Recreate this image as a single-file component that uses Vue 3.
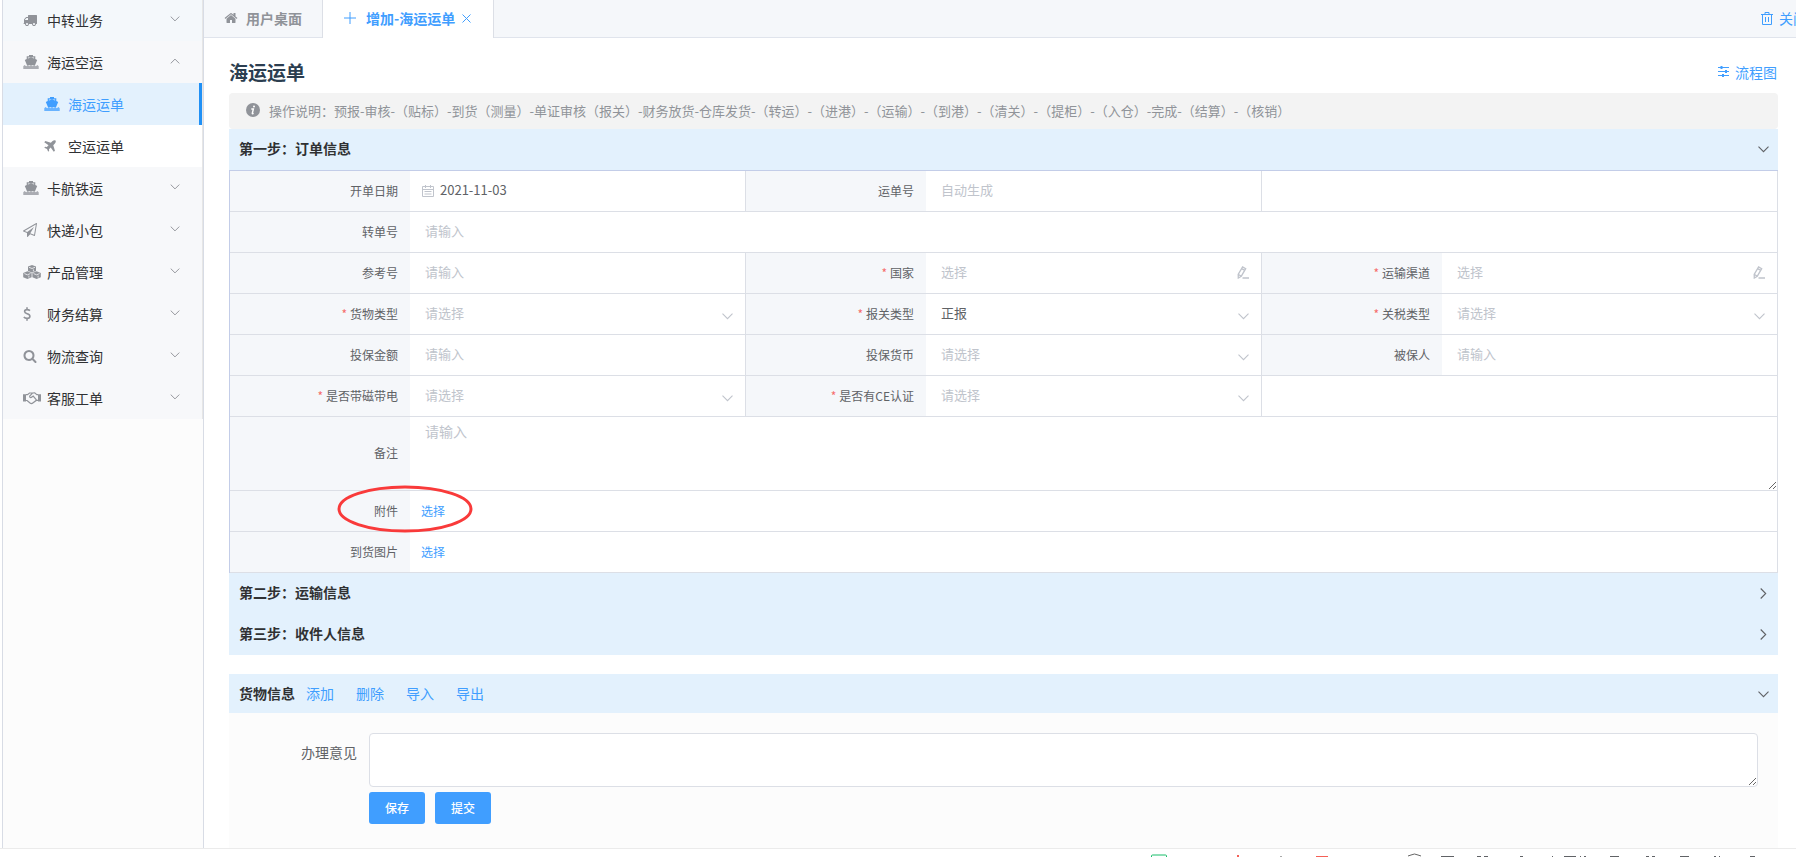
<script setup>
import { ref } from 'vue'

const menu = [
  { text: '中转业务', icon: 'truck', tint: true },
  { text: '海运空运', icon: 'ship', open: true, children: [
    { text: '海运运单', icon: 'ship', active: true },
    { text: '空运运单', icon: 'plane' }
  ] },
  { text: '卡航铁运', icon: 'ship' },
  { text: '快递小包', icon: 'send' },
  { text: '产品管理', icon: 'cubes' },
  { text: '财务结算', icon: 'dollar' },
  { text: '物流查询', icon: 'search' },
  { text: '客服工单', icon: 'handshake' }
]

const fields = [
  { id: 'date', label: '开单日期', type: 'date', value: '2021-11-03' },
  { id: 'waybill', label: '运单号', type: 'text', hint: '自动生成' },
  { id: 'blank1', type: 'blank' },
  { id: 'transfer', label: '转单号', type: 'text', hint: '请输入', wide: true },
  { id: 'reference', label: '参考号', type: 'text', hint: '请输入' },
  { id: 'country', label: '国家', type: 'pick', hint: '选择', required: true },
  { id: 'channel', label: '运输渠道', type: 'pick', hint: '选择', required: true },
  { id: 'cargo', label: '货物类型', type: 'select', hint: '请选择', required: true },
  { id: 'customs', label: '报关类型', type: 'select', value: '正报', required: true },
  { id: 'tariff', label: '关税类型', type: 'select', hint: '请选择', required: true },
  { id: 'amount', label: '投保金额', type: 'text', hint: '请输入' },
  { id: 'currency', label: '投保货币', type: 'select', hint: '请选择' },
  { id: 'insured', label: '被保人', type: 'text', hint: '请输入' },
  { id: 'magnetic', label: '是否带磁带电', type: 'select', hint: '请选择', required: true },
  { id: 'ce', label: '是否有CE认证', type: 'select', hint: '请选择', required: true },
  { id: 'blank2', type: 'blank' },
  { id: 'remark', label: '备注', type: 'area', hint: '请输入', wide: true },
  { id: 'attachment', label: '附件', type: 'file', wide: true, marked: true },
  { id: 'photos', label: '到货图片', type: 'file', wide: true }
]

const actions = ['添加', '删除', '导入', '导出']
const opinion = ref('')
</script>

<template>
  <div class="app" lang="zh-CN">
    <svg class="defs" aria-hidden="true">
      <symbol id="truck" viewBox="0 0 1792 1792"><path d="M640 1408q0-52-38-90t-90-38-90 38-38 90 38 90 90 38 90-38 38-90zm-384-512h384v-256h-158q-13 0-22 9l-195 195q-9 9-9 22v30zm1280 512q0-52-38-90t-90-38-90 38-38 90 38 90 90 38 90-38 38-90zm256-1088v1024q0 15-4 26.5t-13.5 18.5-16.5 11.5-23.5 6-22.5 2-25.5 0-22.5-.5q0 106-75 181t-181 75-181-75-75-181h-384q0 106-75 181t-181 75-181-75-75-181h-64q-3 0-22.5.5t-25.5 0-22.5-2-23.5-6-16.5-11.5-13.5-18.5-4-26.5q0-26 19-45t45-19v-320q0-8-.5-35t0-38 2.5-34.5 6.5-37 14-30.5 22.5-30l198-198q19-19 50.5-32t58.5-13h160v-192q0-26 19-45t45-19h1024q26 0 45 19t19 45z" /></symbol>
      <symbol id="ship" viewBox="0 0 16 14">
        <path d="M6 0h4v1.2h2.3v2.9L14.2 5 12 10.2H4L1.8 5l1.9-.9V1.2H6zM4.9 2.4v1.2L8 2.4l3.1 1.2V2.4z" fill-rule="evenodd" />
        <path d="M.3 11.2 1.6 10l1.6 1.2L4.8 10l1.6 1.2L8 10l1.6 1.2 1.6-1.2 1.6 1.2 1.6-1.2 1.3 1.2V14H.3z" opacity=".75" />
      </symbol>
      <symbol id="plane" viewBox="0 0 14 14"><path d="M13.400.6c.8.8.2 2.500-.7 3.400L10.800 6l2 6.400-1.400 1.300-3.600-5-2 2 .2 1.900-1.100 1.100-1.400-3.200L.3 9.100l1.100-1.100 1.900.2 2-2L.3 2.600l1.300-1.400L8 3.200l2-1.900c.9-.9 2.600-1.500 3.400-.7z" /></symbol>
      <symbol id="send" viewBox="0 0 1792 1792"><path d="M1764 11q33 24 27 64l-256 1536q-5 29-32 45-14 8-31 8-11 0-24-5l-527-215-298 327q-18 21-47 21-14 0-23-4-19-7-30-23.5t-11-36.5v-452l-472-193q-37-14-40-55-3-39 32-59l1664-960q35-21 68 2zm-342 1499l221-1323-1434 827 336 137 863-639-478 797z" /></symbol>
      <symbol id="cubes" viewBox="0 0 18 14">
        <path d="m9 0 4 1.600v4.300L9 7.600 5 5.900V1.600zM4.400 6.200l4.200 1.700v4.400L4.400 14 .2 12.300V7.900zM13.600 6.200l4.200 1.700v4.400L13.600 14l-4.200-1.700V7.900z" />
        <path d="M6 2.300 9 3.500l3-1.200M1.400 8.600l3 1.200 3-1.200M10.600 8.600l3 1.200 3-1.200M10.400 4.400v2M5.900 10.600v2M15.100 10.600v2" fill="none" stroke="#f7f8fa" stroke-width=".8" />
      </symbol>
      <symbol id="dollar" viewBox="0 0 8 14"><path d="M7 3.700C6.200 3 5.300 2.600 4.100 2.600 2.700 2.600 1.600 3.300 1.600 4.500c0 2.900 5.300 1.600 5.300 4.700 0 1.400-1.200 2.200-2.800 2.200-1.300 0-2.500-.5-3.300-1.400M4 .2v2.200M4 11.500v2.300" fill="none" stroke="currentColor" stroke-width="1.600" /></symbol>
      <symbol id="search" viewBox="0 0 1792 1792"><path d="M1216 832q0-185-131.500-316.500t-316.500-131.500-316.500 131.500-131.500 316.500 131.500 316.500 316.500 131.500 316.500-131.500 131.500-316.500zm512 832q0 52-38 90t-90 38q-54 0-90-38l-343-342q-179 124-399 124-143 0-273.500-55.500t-225-150-150-225-55.500-273.500 55.500-273.500 150-225 225-150 273.500-55.500 273.500 55.500 225 150 150 225 55.500 273.500q0 220-124 399l343 343q37 37 37 90z" /></symbol>
      <symbol id="handshake" viewBox="0 0 18 14">
        <path d="M0 3.200h3v7.200H0zM15 3.200h3v7.200h-3z" />
        <path d="M3 3.700h1.500L6.500 2h3l2.200-.1 2.100 1.700H15M3 9.500h1.100L7 12c1 .7 2 .7 2.800 0l3.400-2.600H15M9.500 2.200 6.700 5c-.4 1.600 1.100 2.100 2.200 1L10.200 5l3.200 3.800" fill="none" stroke="currentColor" stroke-width="1.200" />
      </symbol>
      <symbol id="home" viewBox="0 0 1792 1792"><path d="M1472 992v480q0 26-19 45t-45 19h-384v-384h-256v384h-384q-26 0-45-19t-19-45v-480q0-1 .5-3t.5-3l575-474 575 474q1 2 1 6zm223-69l-62 74q-8 9-21 11h-3q-13 0-21-7l-692-577-692 577q-12 8-24 7-13-2-21-11l-62-74q-8-10-7-23.500t11-21.500l719-599q32-26 76-26t76 26l244 204v-195q0-14 9-23t23-9h192q14 0 23 9t9 23v408l219 182q10 8 11 21.500t-7 23.500z" /></symbol>
      <symbol id="down" viewBox="0 0 11 7"><path d="m.5.7 5 5 5-5" fill="none" stroke="currentColor" stroke-width="1.100" /></symbol>
      <symbol id="edit" viewBox="0 0 12 13"><path d="m1.200 8.300 4.400-7.400 3.100 1.800-4.400 7.500-3 1.800zM4.600 2.600l3.100 1.800M1.200 8.300l3.100 1.900M5.500 12H12" fill="none" stroke="currentColor" stroke-width="1.300" /></symbol>
    </svg>

    <div class="body">
      <aside class="sidebar">
        <nav class="menu">
          <template v-for="item in menu" :key="item.text">
            <button type="button" class="item" :class="{ tint: item.tint }" :aria-expanded="!!item.open">
              <span class="icon-box"><svg class="icon" :class="item.icon"><use :href="'#' + item.icon" /></svg></span>
              <span>{{ item.text }}</span>
              <svg class="caret" :class="{ up: item.open }"><use href="#down" /></svg>
            </button>
            <a v-for="sub in item.children" :key="sub.text" href="#" class="item sub" :class="{ active: sub.active }">
              <span class="icon-box"><svg class="icon" :class="sub.icon"><use :href="'#' + sub.icon" /></svg></span>
              <span>{{ sub.text }}</span>
            </a>
          </template>
        </nav>
      </aside>

      <main class="main">
        <div class="tabs">
          <button type="button" class="tab"><svg class="home"><use href="#home" /></svg>用户桌面</button>
          <button type="button" class="tab current">
            <svg class="plus" viewBox="0 0 12 12"><path d="M6 0v12M0 6h12" /></svg>增加-海运运单
            <svg class="close" viewBox="0 0 9 9"><path d="m.5.5 8 8m0-8-8 8" /></svg>
          </button>
          <a href="#" class="close-all">
            <svg viewBox="0 0 12 13"><path d="M0 2.500h12M4 2.500v-2h4v2M1.500 2.500v10h9v-10M4.500 5v5M7.500 5v5" /></svg>关闭
          </a>
        </div>

        <div class="content">
          <header class="heading">
            <h1>海运运单</h1>
            <a href="#" class="flow">
              <svg viewBox="0 0 11 11"><path d="M0 1.500h11M0 5.500h11M0 9.500h11" /><path d="M2.500 1.500h2M7 5.500h2M4 9.500h2" stroke-width="3" /></svg>流程图
            </a>
          </header>

          <p class="notice">
            <svg viewBox="0 0 14 14"><circle cx="7" cy="7" r="7" fill="#909399" /><path d="M5.300 6H7.400L6.300 10.200q-.2 1 1.300.2" fill="none" stroke="#fff" stroke-width="1.400" /><circle cx="8" cy="3.500" r="1" fill="#fff" /></svg>
            操作说明：预报-审核-（贴标）-到货（测量）-单证审核（报关）-财务放货-仓库发货-（转运）-（进港）-（运输）-（到港）-（清关）-（提柜）-（入仓）-完成-（结算）-（核销）
          </p>

          <button type="button" class="step" aria-expanded="true">第一步：订单信息<svg class="arrow"><use href="#down" /></svg></button>
          <form class="grid">
            <div v-for="f in fields" :key="f.id" class="cell" :class="{ wide: f.wide }">
              <label v-if="f.label" class="label" :for="f.id"><span v-if="f.required" class="star">*</span>{{ f.label }}</label>
              <div v-if="f.type === 'date'" class="control dated">
                <svg class="calendar" viewBox="0 0 12 12"><path d="M.5 1.500h11v10H.5zM.5 4.500h11M3.500 0v3M8.500 0v3M2.500 6.500h7M2.500 9h7" /></svg>
                <input :id="f.id" type="text" :value="f.value">
              </div>
              <div v-else-if="f.type === 'text'" class="control"><input :id="f.id" type="text" :placeholder="f.hint"></div>
              <div v-else-if="f.type === 'pick'" class="control">
                <input :id="f.id" type="text" :placeholder="f.hint"><svg class="edit"><use href="#edit" /></svg>
              </div>
              <div v-else-if="f.type === 'select'" class="control">
                <select :id="f.id" :class="{ empty: !f.value }"><option>{{ f.value || f.hint }}</option></select>
                <svg class="drop"><use href="#down" /></svg>
              </div>
              <div v-else-if="f.type === 'area'" class="control"><textarea :id="f.id" :placeholder="f.hint"></textarea></div>
              <div v-else-if="f.type === 'file'" class="control"><button :id="f.id" type="button" class="choose">选择</button></div>
              <svg v-if="f.marked" class="ring" viewBox="0 0 136 48"><ellipse cx="68" cy="24" rx="66" ry="22" /></svg>
            </div>
          </form>
          <button type="button" class="step" aria-expanded="false">第二步：运输信息<svg class="arrow side"><use href="#down" /></svg></button>
          <button type="button" class="step" aria-expanded="false">第三步：收件人信息<svg class="arrow side"><use href="#down" /></svg></button>

          <section class="goods">
            <div class="goods-head">
              <h2>货物信息</h2>
              <button v-for="a in actions" :key="a" type="button" class="action">{{ a }}</button>
              <svg class="arrow"><use href="#down" /></svg>
            </div>
            <div class="panel">
              <label for="opinion">办理意见</label>
              <div class="reply">
                <textarea id="opinion" v-model="opinion"></textarea>
                <div class="buttons">
                  <button type="button">保存</button>
                  <button type="button">提交</button>
                </div>
              </div>
            </div>
          </section>
        </div>
      </main>
    </div>

    <footer class="dock">
      <svg width="666" height="8" viewBox="0 0 666 8">
        <path d="M21.500 8V7q0-1 1-1h13q1 0 1 1v1" fill="none" stroke="#19be6b" />
        <path d="M107 6h2v2h-2zM186 7h12v1h-12z" fill="#f56056" />
        <path d="M150 7h2v1h-2z" fill="#aaa" />
        <path d="m278 7 3-1 3.500-1 3.500 1 3 1" fill="none" stroke="#666" />
        <path d="M311 7h13v1h-13zM347 7h4v1h-4zM354 7h4v1h-4zM390 7h3v1h-3zM422 7h1v1h-1zM434 7h12v1h-12zM450 7h1v1h-1zM454 7h2v1h-2zM480 7h9v1h-9zM516 7h3v1h-3zM522 7h3v1h-3zM550 7h9v1h-9zM584 7h2v1h-2zM589 7h1v1h-1zM620 7h5v1h-5z" fill="#606266" />
      </svg>
    </footer>
  </div>
</template>

<style>
body { margin: 0; background: #fff; }
</style>

<style scoped>
* { box-sizing: border-box; }
.app {
  display: flex;
  flex-direction: column;
  min-height: 100vh;
  overflow: hidden;
  font-family: "Noto Sans CJK SC", "Noto Sans", sans-serif;
  font-size: 14px;
  color: #303133;
}
button, input, select, textarea { font: inherit; color: inherit; margin: 0; border: 0; background: none; outline: 0; }
button { cursor: pointer; padding: 0; }
a { color: #409eff; text-decoration: none; }
svg { flex: none; fill: currentColor; }
.defs { position: absolute; width: 0; height: 0; }
.body { flex: 1; display: flex; }

.sidebar { flex: none; width: 202px; margin-left: 2px; border: solid #d8dce5; border-width: 0 1px; background: #fcfcfc; }
.menu { display: flex; flex-direction: column; margin-top: -1px; border-right: 1px solid #e6e6e6; }
.item { display: flex; align-items: center; gap: 6px; height: 42px; padding: 0 22px 0 20px; background: #f7f8fa; color: #303133; text-align: left; }
.item.tint { background: #f4f8fb; }
.icon-box { display: flex; width: 18px; color: #909399; }
.icon { width: 14px; height: 14px; }
.icon.ship { width: 16px; }
.icon.cubes, .icon.handshake { width: 18px; }
.icon.dollar { width: 8px; }
.icon.plane { width: 12px; height: 12px; }
.caret { width: 10px; height: 6px; margin: 0 0 3px auto; color: #909399; }
.caret.up { transform: rotate(180deg); }
.sub { padding-left: 41px; background: #fff; }
.sub.active { border-right: 3px solid #2090f5; background: #e3f1fd; color: #409eff; }
.sub.active .icon-box { color: #409eff; }

.main { flex: 1; min-width: 0; display: flex; flex-direction: column; }
.tabs { display: flex; height: 38px; background: #f5f7fa; box-shadow: inset 0 -1px #e0e4ec; overflow: hidden; }
.tab { display: flex; align-items: center; padding: 0 20px 2px; border-right: 1px solid #dcdfe6; font-weight: 700; color: #909399; white-space: nowrap; }
.tab.current { padding: 0 22px 2px 21px; background: #fff; color: #409eff; }
.home { width: 14px; height: 14px; margin-right: 8px; }
.tab path, .close-all path, .flow path { fill: none; stroke: currentColor; }
.plus { width: 12px; height: 12px; margin-right: 10px; }
.close { width: 9px; height: 9px; margin-left: 7px; }
.close-all { display: flex; align-items: center; gap: 6px; margin: 0 -11px 0 auto; padding-bottom: 2px; white-space: nowrap; }
.close-all svg { width: 12px; height: 13px; }

.content { flex: 1; display: flex; flex-direction: column; padding: 0 18px 0 25px; }
.heading { display: flex; align-items: center; justify-content: space-between; height: 55px; padding: 12px 1px 0 0; }
h1 { margin: 0; font-size: 19px; line-height: 28px; color: #2c3e50; }
.flow { display: flex; align-items: center; gap: 6px; }
.flow svg { width: 11px; height: 11px; }
.notice { display: flex; align-items: center; gap: 9px; min-height: 36px; margin: 0; padding: 0 17px 2px; border-radius: 4px; background: #f3f3f3; font-size: 13px; color: #909399; }
.notice svg { width: 14px; height: 14px; }
.step { display: flex; align-items: center; justify-content: space-between; min-height: 41px; padding: 0 9px 3px 10px; background: #e3f1fd; font-weight: 700; text-align: left; }
.arrow { width: 11px; height: 7px; margin-top: 3px; color: #606266; }
.arrow.side { transform: rotate(-90deg); }

.grid { display: grid; grid-template-columns: repeat(3, 1fr); border: solid #c3cde8; border-width: 1px 0 0 1px; }
.cell { position: relative; display: flex; min-height: 41px; border: solid #dcdfe6; border-width: 0 1px 1px 0; }
.wide { grid-column: 1 / -1; }
.label { flex: none; display: flex; align-items: center; justify-content: flex-end; width: 180px; padding: 0 12px 2px 0; background: #f5f7fa; font-size: 12px; color: #606266; }
.star { margin-right: 3px; color: #f56c6c; }
.control { position: relative; flex: 1; display: flex; align-items: stretch; font-size: 13px; color: #606266; }
.control input, .control select { flex: 1; min-width: 0; width: 100%; padding: 0 36px 4px 15px; }
.control select { appearance: none; cursor: pointer; }
.control .empty { color: #c0c4cc; }
.control input::placeholder, .control textarea::placeholder { color: #c0c4cc; opacity: 1; }
.dated { align-items: center; padding-left: 12px; }
.control.dated input { align-self: stretch; padding-left: 6px; }
.calendar { width: 12px; height: 12px; fill: none; stroke: #c0c4cc; }
.drop, .edit { position: absolute; right: 12px; color: #c0c4cc; pointer-events: none; }
.drop { top: 19px; width: 11px; height: 7px; }
.edit { top: 13px; width: 12px; height: 13px; fill: none; }
.control textarea { display: block; width: 100%; height: 73px; padding: 4px 15px; font-size: 14px; line-height: 21px; resize: vertical; }
.choose { padding: 0 11px 2px; font-size: 12px; color: #409eff; }
.ring { position: absolute; left: 107px; top: -6px; width: 136px; height: 48px; fill: none; stroke: #f93a3a; stroke-width: 3px; pointer-events: none; z-index: 1; }

.goods { flex: 1; display: flex; flex-direction: column; margin-top: 19px; }
.goods-head { display: flex; align-items: center; min-height: 39px; padding: 0 9px 2px 10px; background: #e3f1fd; }
h2 { margin: 0; font-size: 14px; }
.action { margin: 0 11px; color: #409eff; }
.goods-head .arrow { margin-left: auto; }
.panel { flex: 1; display: flex; padding: 20px 20px 24px 0; background: #fcfcfc; }
.panel label { width: 140px; padding-right: 12px; line-height: 38px; text-align: right; color: #606266; }
.reply { flex: 1; }
.reply textarea { display: block; width: 100%; height: 54px; padding: 5px 15px; border: 1px solid #dcdfe6; border-radius: 4px; background: #fff; resize: vertical; }
.buttons { display: flex; gap: 10px; margin-top: 5px; }
.buttons button { width: 56px; height: 32px; padding-bottom: 2px; border-radius: 3px; background: #409eff; color: #fff; font-size: 12px; font-weight: 500; }
.dock { display: flex; justify-content: flex-end; border-top: 1px solid #ebebeb; }
</style>
